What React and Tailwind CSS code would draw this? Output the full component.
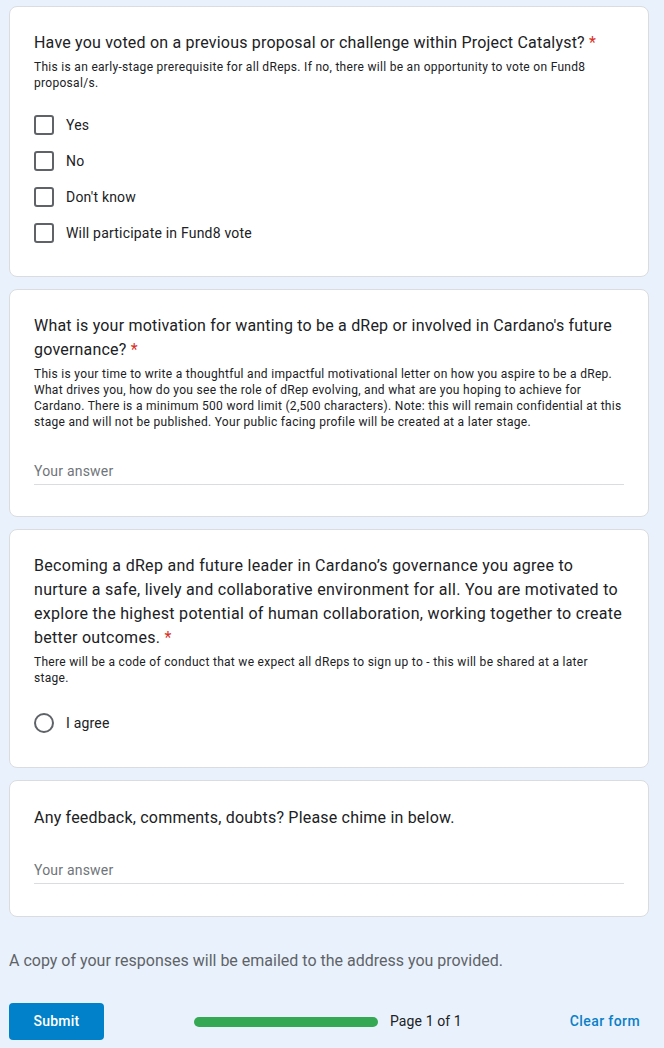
import React from "react";

const title = { fontFamily: "Roboto, 'Open Sans', sans-serif" };
const body = { fontFamily: "Roboto, 'Liberation Sans', sans-serif" };

function Card({ children, pb = "pb-6" }) {
  return (
    <div className={"w-[640px] bg-white border border-[#dadce0] rounded-lg px-6 pt-6 " + pb}>{children}</div>
  );
}

function Title({ children, required, track = "tracking-[0.2px]" }) {
  return (
    <div className={"text-[16px] leading-6 text-[#202124] " + track} style={title}>
      {children}
      {required && <span className="text-[#d93025]"> *</span>}
    </div>
  );
}

function Desc({ children }) {
  return (
    <div className="mt-1 text-[12px] leading-4 tracking-[0.3px] text-[#202124]" style={body}>
      {children}
    </div>
  );
}

function CheckRow({ label }) {
  return (
    <div className="h-9 flex items-center gap-3">
      <div className="w-5 h-5 border-2 border-[#5f6368] rounded-[3px] box-border" />
      <span className="text-[14px] tracking-[0.2px] text-[#202124]" style={body}>{label}</span>
    </div>
  );
}

function Answer({ mt }) {
  return (
    <div className={mt}>
      <div className="text-[14px] leading-5 tracking-[0.2px] text-[#70757a] pb-[3px] border-b border-[#dadce0]" style={body}>
        Your answer
      </div>
      <div className="h-[7px]" />
    </div>
  );
}

export default function App() {
  return (
    <div className="min-h-[1048px] bg-[#e9f2fc] pt-[6px] pl-[9px]" style={body}>
      <div className="flex flex-col gap-3 w-[640px]">
        <Card pb="pb-[25px]">
          <Title required>Have you voted on a previous proposal or challenge within Project Catalyst?</Title>
          <Desc>
            This is an early-stage prerequisite for all dReps. If no, there will be an opportunity to vote on Fund8 proposal/s.
          </Desc>
          <div className="mt-4 flex flex-col">
            <CheckRow label="Yes" />
            <CheckRow label="No" />
            <CheckRow label="Don't know" />
            <CheckRow label="Will participate in Fund8 vote" />
          </div>
        </Card>

        <Card>
          <Title required>What is your motivation for wanting to be a dRep or involved in Cardano's future governance?</Title>
          <Desc>
            This is your time to write a thoughtful and impactful motivational letter on how you aspire to be a dRep. What drives you, how do you see the role of dRep evolving, and what are you hoping to achieve for Cardano. There is a minimum 500 word limit (2,500 characters). Note: this will remain confidential at this stage and will not be published. Your public facing profile will be created at a later stage.
          </Desc>
          <Answer mt="mt-[31px]" />
        </Card>

        <Card pb="pb-[26px]">
          <Title required track="tracking-[0.3px]">
            Becoming a dRep and future leader in Cardano’s governance you agree to
            <br />
            nurture a safe, lively and collaborative environment for all. You are motivated to
            <br />
            explore the highest potential of human collaboration, working together to create
            <br />
            better outcomes.
          </Title>
          <Desc>
            There will be a code of conduct that we expect all dReps to sign up to - this will be shared at a later stage.
          </Desc>
          <div className="mt-[19px] h-9 flex items-center gap-3">
            <div className="w-5 h-5 border-2 border-[#5f6368] rounded-full box-border" />
            <span className="text-[14px] tracking-[0.2px] text-[#202124]" style={body}>I agree</span>
          </div>
        </Card>

        <Card pb="pb-[25px]">
          <div className="pt-px">
            <Title>Any feedback, comments, doubts? Please chime in below.</Title>
          </div>
          <Answer mt="mt-[30px]" />
        </Card>
      </div>

      <div className="mt-[32px] text-[16px] leading-6 text-[#5f6368]" style={body}>
        A copy of your responses will be emailed to the address you provided.
      </div>

      <div className="mt-[30px] w-[640px] flex items-center">
        <button className="w-[95px] h-[37px] rounded bg-[#0181c9] text-white text-[14px] font-medium tracking-[0.25px]" style={body}>
          Submit
        </button>
        <div className="ml-[90px] w-[184px] h-[10px] rounded-full bg-[#34a853]" />
        <span className="ml-[12px] text-[14px] tracking-[0.1px] text-[#202124]" style={body}>Page 1 of 1</span>
        <span className="ml-auto mr-[9px] text-[14px] font-medium tracking-[0.4px] text-[#0b7fc7]" style={body}>Clear form</span>
      </div>
    </div>
  );
}
